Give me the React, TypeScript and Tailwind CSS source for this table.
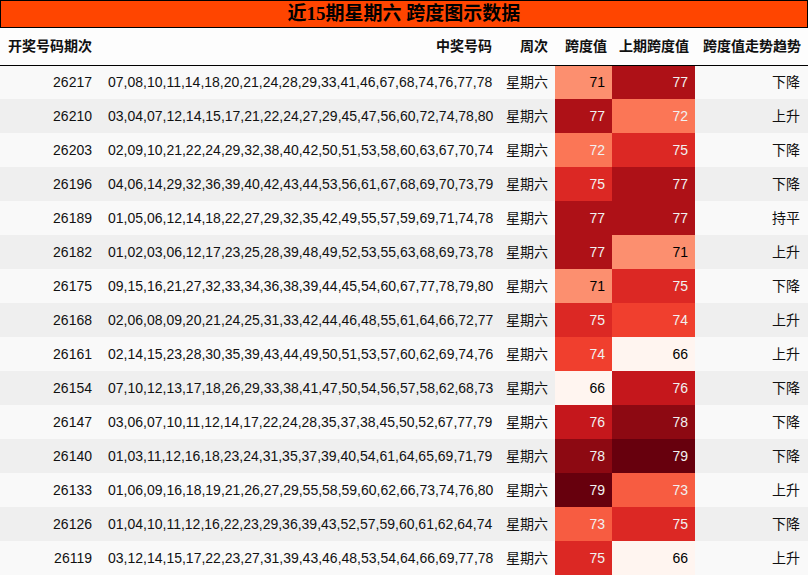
import React from "react";

type Row = {
  issue: string;
  nums: string;
  span: number;
  prev: number;
  trend: string;
};

const rows: Row[] = [
  { issue: "26217", nums: "07,08,10,11,14,18,20,21,24,28,29,33,41,46,67,68,74,76,77,78", span: 71, prev: 77, trend: "下降" },
  { issue: "26210", nums: "03,04,07,12,14,15,17,21,22,24,27,29,45,47,56,60,72,74,78,80", span: 77, prev: 72, trend: "上升" },
  { issue: "26203", nums: "02,09,10,21,22,24,29,32,38,40,42,50,51,53,58,60,63,67,70,74", span: 72, prev: 75, trend: "下降" },
  { issue: "26196", nums: "04,06,14,29,32,36,39,40,42,43,44,53,56,61,67,68,69,70,73,79", span: 75, prev: 77, trend: "下降" },
  { issue: "26189", nums: "01,05,06,12,14,18,22,27,29,32,35,42,49,55,57,59,69,71,74,78", span: 77, prev: 77, trend: "持平" },
  { issue: "26182", nums: "01,02,03,06,12,17,23,25,28,39,48,49,52,53,55,63,68,69,73,78", span: 77, prev: 71, trend: "上升" },
  { issue: "26175", nums: "09,15,16,21,27,32,33,34,36,38,39,44,45,54,60,67,77,78,79,80", span: 71, prev: 75, trend: "下降" },
  { issue: "26168", nums: "02,06,08,09,20,21,24,25,31,33,42,44,46,48,55,61,64,66,72,77", span: 75, prev: 74, trend: "上升" },
  { issue: "26161", nums: "02,14,15,23,28,30,35,39,43,44,49,50,51,53,57,60,62,69,74,76", span: 74, prev: 66, trend: "上升" },
  { issue: "26154", nums: "07,10,12,13,17,18,26,29,33,38,41,47,50,54,56,57,58,62,68,73", span: 66, prev: 76, trend: "下降" },
  { issue: "26147", nums: "03,06,07,10,11,12,14,17,22,24,28,35,37,38,45,50,52,67,77,79", span: 76, prev: 78, trend: "下降" },
  { issue: "26140", nums: "01,03,11,12,16,18,23,24,31,35,37,39,40,54,61,64,65,69,71,79", span: 78, prev: 79, trend: "下降" },
  { issue: "26133", nums: "01,06,09,16,18,19,21,26,27,29,55,58,59,60,62,66,73,74,76,80", span: 79, prev: 73, trend: "上升" },
  { issue: "26126", nums: "01,04,10,11,12,16,22,23,29,36,39,43,52,57,59,60,61,62,64,74", span: 73, prev: 75, trend: "下降" },
  { issue: "26119", nums: "03,12,14,15,17,22,23,27,31,39,43,46,48,53,54,64,66,69,77,78", span: 75, prev: 66, trend: "上升" },
];

// Reds gradient, 66 -> 79
const shade: Record<number, string> = {
  66: "bg-[#fff5f0] text-[#000000]",
  71: "bg-[#fc8f6f] text-[#000000]",
  72: "bg-[#fb7656] text-[#f1f1f1]",
  73: "bg-[#f75c41] text-[#f1f1f1]",
  74: "bg-[#f03f2e] text-[#f1f1f1]",
  75: "bg-[#dc2824] text-[#f1f1f1]",
  76: "bg-[#c5171c] text-[#f1f1f1]",
  77: "bg-[#ae1117] text-[#f1f1f1]",
  78: "bg-[#8d0912] text-[#f1f1f1]",
  79: "bg-[#67000d] text-[#f1f1f1]",
};

const font = { fontFamily: '"Liberation Sans", "Noto Sans CJK SC", sans-serif' };

export default function App() {
  return (
    <div className="w-[808px] h-[576px] overflow-hidden bg-white text-[14px] text-[#111]" style={font}>
      <div
        className="h-[28px] border border-black bg-[#ff4500] flex items-center justify-center font-bold text-[19px] text-black"
        style={{ fontFamily: '"Liberation Serif", "Noto Sans CJK SC", serif' }}
      >
        近15期星期六 跨度图示数据
      </div>
      <table className="w-[808px] border-collapse table-fixed">
        <colgroup>
          <col className="w-[100px]" />
          <col className="w-[399px]" />
          <col className="w-[56px]" />
          <col className="w-[57px]" />
          <col className="w-[83px]" />
          <col className="w-[113px]" />
        </colgroup>
        <thead>
          <tr className="h-[37px] bg-[#fdfdfd] border-b border-black font-bold whitespace-nowrap">
            <th className="pl-[8px] text-left">开奖号码期次</th>
            <th className="text-right px-[7px]">中奖号码</th>
            <th className="text-right px-[7px]">周次</th>
            <th className="text-right px-[5px]">跨度值</th>
            <th className="text-right px-[6px]">上期跨度值</th>
            <th className="text-right px-[7px]">跨度值走势趋势</th>
          </tr>
        </thead>
        <tbody>
          {rows.map((r, i) => (
            <tr key={r.issue} className={`h-[34px] ${i % 2 === 0 ? "bg-[#f9f9f9]" : "bg-[#efefef]"}`}>
              <td className="text-right px-[8px]">{r.issue}</td>
              <td className="text-right px-[8px] whitespace-nowrap">{r.nums}</td>
              <td className="text-right px-[7px]">星期六</td>
              <td className={`text-right px-[7px] ${shade[r.span]}`}>{r.span}</td>
              <td className={`text-right px-[7px] ${shade[r.prev]}`}>{r.prev}</td>
              <td className="text-right px-[8px]">{r.trend}</td>
            </tr>
          ))}
        </tbody>
      </table>
    </div>
  );
}
